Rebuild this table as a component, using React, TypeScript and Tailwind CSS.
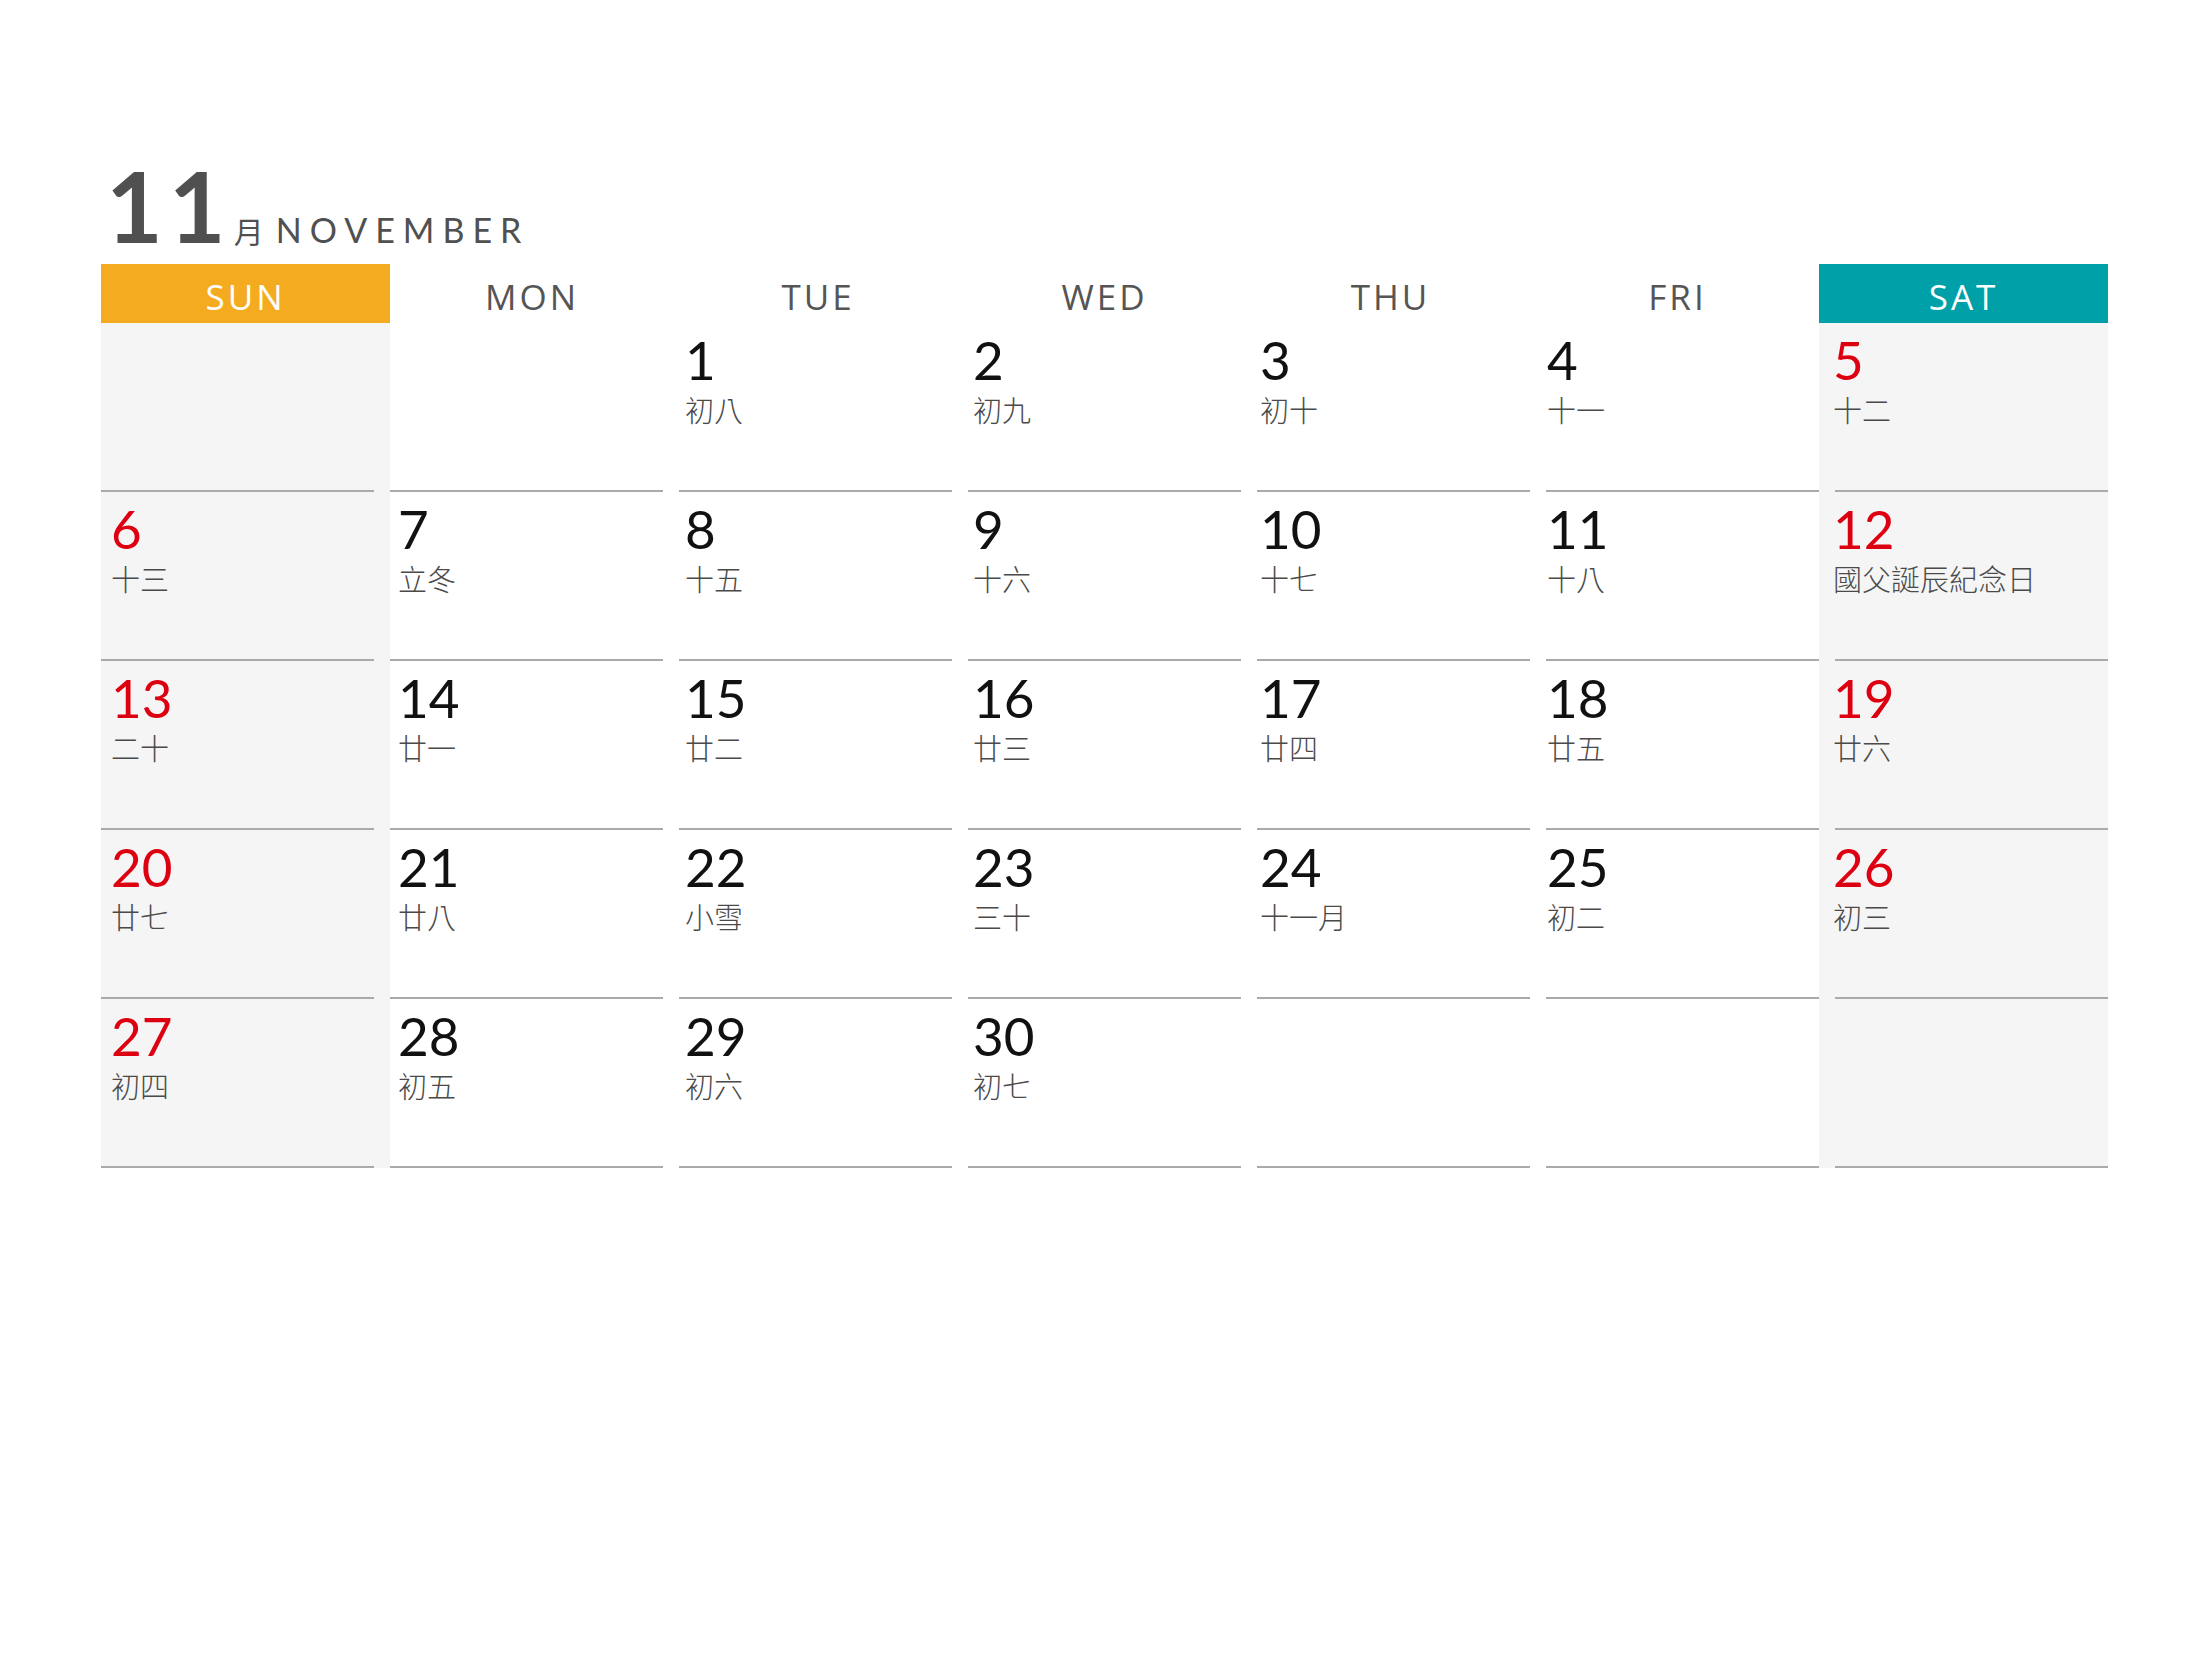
type Day = { n: number; lunar: string } | null;

const weeks: Day[][] = [
  [null, null, { n: 1, lunar: "初八" }, { n: 2, lunar: "初九" }, { n: 3, lunar: "初十" }, { n: 4, lunar: "十一" }, { n: 5, lunar: "十二" }],
  [{ n: 6, lunar: "十三" }, { n: 7, lunar: "立冬" }, { n: 8, lunar: "十五" }, { n: 9, lunar: "十六" }, { n: 10, lunar: "十七" }, { n: 11, lunar: "十八" }, { n: 12, lunar: "國父誕辰紀念日" }],
  [{ n: 13, lunar: "二十" }, { n: 14, lunar: "廿一" }, { n: 15, lunar: "廿二" }, { n: 16, lunar: "廿三" }, { n: 17, lunar: "廿四" }, { n: 18, lunar: "廿五" }, { n: 19, lunar: "廿六" }],
  [{ n: 20, lunar: "廿七" }, { n: 21, lunar: "廿八" }, { n: 22, lunar: "小雪" }, { n: 23, lunar: "三十" }, { n: 24, lunar: "十一月" }, { n: 25, lunar: "初二" }, { n: 26, lunar: "初三" }],
  [{ n: 27, lunar: "初四" }, { n: 28, lunar: "初五" }, { n: 29, lunar: "初六" }, { n: 30, lunar: "初七" }, null, null, null],
];

const weekdays = ["SUN", "MON", "TUE", "WED", "THU", "FRI", "SAT"];

// the line of each column sits inside its cell; weekend columns take the 16px gap too
const colPad = ["pr-[16px]", "pr-[16px]", "pr-[16px]", "pr-[16px]", "pr-[16px]", "", "pl-[16px]"];
// text drifts a little left of the lines from column to column
const textPad = ["pl-[10px]", "pl-[8px]", "pl-[6px]", "pl-[5px]", "pl-[3px]", "pl-[1px]", "-ml-[2px]"];
const headPad = ["", "pl-[11px]", "pl-[5px]", "", "pr-[6px]", "pr-[10px]", ""];

function HeaderCell({ label, i }: { label: string; i: number }) {
  if (i === 0 || i === 6) {
    return (
      <div
        className={`flex h-[59px] items-center justify-center pt-[5px] text-[35px] leading-none tracking-[3px] text-white ${
          i === 0 ? "bg-[#f5ab1f]" : "bg-[#00a0a9]"
        }`}
      >
        {label}
      </div>
    );
  }
  return (
    <div className={`h-[59px] ${colPad[i]}`}>
      <div
        className={`flex h-full items-center justify-center pt-[5px] text-[35px] leading-none tracking-[3px] text-[#555] ${headPad[i]}`}
      >
        {label}
      </div>
    </div>
  );
}

function DayCell({ day, i }: { day: Day; i: number }) {
  const weekend = i === 0 || i === 6;
  return (
    <div className={`flex h-[169px] flex-col ${weekend ? "bg-[#f5f5f5]" : ""} ${colPad[i]}`}>
      <div className={`flex-1 pt-[10px] ${textPad[i]}`}>
        {day && (
          <>
            <div
              className={`text-[53px] font-normal leading-none ${weekend ? "text-[#dd0010]" : "text-[#111]"}`}
              style={{ fontFamily: "Lato, 'Noto Sans', sans-serif" }}
            >
              {day.n}
            </div>
            <div
              className="mt-[9px] text-[29px] font-light leading-none text-[#4a4a4a]"
              style={{ fontFamily: "'Noto Sans CJK TC', 'Noto Sans CJK SC', sans-serif" }}
            >
              {day.lunar}
            </div>
          </>
        )}
      </div>
      <div className="h-[2px] bg-[#aaaaaa]" />
    </div>
  );
}

export default function App() {
  return (
    <div className="min-h-screen w-full bg-white" style={{ fontFamily: "'Open Sans', sans-serif" }}>
      <div className="w-[2108px] pl-[101px] pt-[156px]">
        <div className="flex items-baseline pl-[5px] text-[#505050]">
          <span
            className="text-[98px] font-bold leading-none tracking-[6px]"
            style={{ fontFamily: "Lato, sans-serif" }}
          >
            11
          </span>
          <span
            className="ml-[2px] text-[30px] leading-none"
            style={{ fontFamily: "'Noto Sans CJK TC', sans-serif" }}
          >
            月
          </span>
          <span
            className="ml-[12px] text-[34px] leading-none tracking-[8px]"
            style={{ fontFamily: "Lato, sans-serif" }}
          >
            NOVEMBER
          </span>
        </div>

        <div className="mt-[10px] grid grid-cols-[289px_289px_289px_289px_289px_273px_289px]">
          {weekdays.map((w, i) => (
            <HeaderCell key={w} label={w} i={i} />
          ))}
          {weeks.map((week, r) =>
            week.map((day, i) => <DayCell key={`${r}-${i}`} day={day} i={i} />)
          )}
        </div>
      </div>
    </div>
  );
}
